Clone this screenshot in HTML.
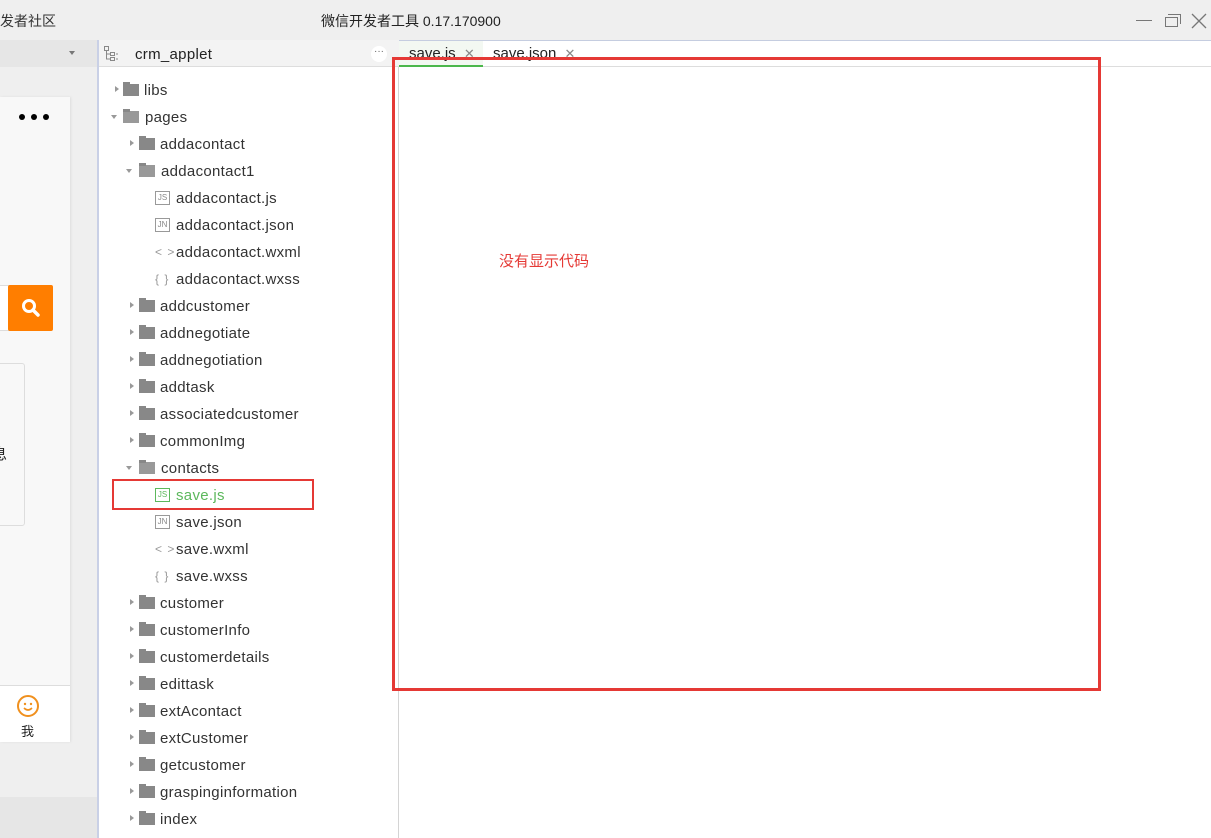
<!DOCTYPE html>
<html><head><meta charset="utf-8"><style>
*{margin:0;padding:0;box-sizing:border-box}
body{width:1211px;height:838px;overflow:hidden;background:#fff;font-family:"Liberation Sans","Noto Sans CJK SC",sans-serif;position:relative;color:#333}
.a{position:absolute}
.row{position:absolute;height:27px;line-height:29px;font-size:15px;letter-spacing:0.3px;color:#333;white-space:nowrap}
.arr{position:absolute;width:0;height:0}
.ar{border-left:4px solid #999;border-top:3px solid transparent;border-bottom:3px solid transparent}
.ad{border-top:4px solid #999;border-left:3px solid transparent;border-right:3px solid transparent}
.fold{position:absolute;width:16px;height:12px;background:#888;top:8px}
.fold:before{content:"";position:absolute;left:0;top:-2px;width:7px;height:3px;background:#888}
.fi{position:absolute;top:7px;width:15px;height:14px;border:1px solid #999;font-size:8px;line-height:12px;text-align:center;color:#888;letter-spacing:0}
.fs{position:absolute;top:0;font-size:12px;color:#999;letter-spacing:1px}
</style></head><body>
<div class="a" style="left:0;top:0;width:1211px;height:40px;background:#efefef"></div>
<div class="a" style="left:0;top:11px;font-size:14px;color:#333">发者社区</div>
<div class="a" style="left:321px;top:11px;font-size:14px;color:#222">微信开发者工具 0.17.170900</div>
<div class="a" style="left:1136px;top:20px;width:16px;height:1px;background:#777"></div>
<div class="a" style="left:1165px;top:17px;width:13px;height:10px;border:1px solid #777"></div>
<div class="a" style="left:1168px;top:14px;width:13px;height:10px;border-top:1px solid #777;border-right:1px solid #777"></div>
<svg class="a" style="left:1191px;top:13px" width="16" height="16"><path d="M1 1L15 15M15 1L1 15" stroke="#777" stroke-width="1.3"/></svg>
<div class="a" style="left:399px;top:40px;width:812px;height:1px;background:#c5cde0"></div>
<div class="a" style="left:0;top:40px;width:97px;height:798px;background:#efefef"></div>
<div class="a" style="left:0;top:40px;width:97px;height:27px;background:#e6e6e6"></div>
<div class="arr ad" style="left:69px;top:51px;border-top-color:#777"></div>
<div class="a" style="left:0;top:97px;width:70px;height:645px;background:#f8f8f8;box-shadow:1px 0 2px #ddd"></div>
<div class="a" style="left:19px;top:114px;width:6px;height:6px;border-radius:3px;background:#000"></div>
<div class="a" style="left:31px;top:114px;width:6px;height:6px;border-radius:3px;background:#000"></div>
<div class="a" style="left:43px;top:114px;width:6px;height:6px;border-radius:3px;background:#000"></div>
<div class="a" style="left:0;top:285px;width:10px;height:46px;background:#fff;border:1px solid #ddd;border-left:none"></div>
<div class="a" style="left:8px;top:285px;width:45px;height:46px;background:#ff7e00;border-radius:2px"></div>
<svg class="a" style="left:20px;top:297px" width="22" height="22"><circle cx="9" cy="9" r="5.5" fill="none" stroke="#fff" stroke-width="3"/><path d="M13 13 L18 18" stroke="#fff" stroke-width="3.5" stroke-linecap="round"/></svg>
<div class="a" style="left:-3px;top:363px;width:28px;height:163px;border:1px solid #ddd;border-radius:3px;background:#f8f8f8"></div>
<div class="a" style="left:-8px;top:443px;font-size:15px;color:#222">息</div>
<div class="a" style="left:0;top:685px;width:70px;height:57px;background:#fff;border-top:1px solid #ddd"></div>
<svg class="a" style="left:16px;top:694px" width="26" height="24"><circle cx="12" cy="12" r="10" fill="none" stroke="#f0901e" stroke-width="2"/><circle cx="9" cy="10" r="1.2" fill="#f0901e"/><circle cx="15" cy="10" r="1.2" fill="#f0901e"/><path d="M8 14 Q12 18 16 14" fill="none" stroke="#f0901e" stroke-width="1.6"/></svg>
<div class="a" style="left:21px;top:721px;font-size:13px;color:#222">我</div>
<div class="a" style="left:0;top:797px;width:97px;height:41px;background:#e6e6e6"></div>
<div class="a" style="left:97px;top:40px;width:2px;height:798px;background:#c9d0e6"></div>
<div class="a" style="left:99px;top:40px;width:300px;height:27px;background:#f3f3f3;border-bottom:1px solid #ddd"></div>
<svg class="a" style="left:103px;top:45px" width="18" height="18"><g fill="none" stroke="#888" stroke-width="1"><rect x="1.5" y="1.5" width="4" height="4"/><rect x="7.5" y="7.5" width="4" height="3"/><rect x="7.5" y="12.5" width="4" height="3"/><path d="M3.5 5.5V14H7.5M3.5 9H7.5M13 9h2M13 14h2"/></g></svg>
<div class="a" style="left:135px;top:46px;font-size:15px;letter-spacing:0.3px;color:#222">crm_applet</div>
<div class="a" style="left:371px;top:46px;width:16px;height:16px;border-radius:8px;background:#fff;font-size:10px;line-height:12px;text-align:center;color:#666">···</div>
<div class="a" style="left:398px;top:67px;width:1px;height:771px;background:#d4d4d4"></div>
<div class="a" style="left:399px;top:41px;width:84px;height:26px;background:#f3f8f2;border-bottom:2px solid #4cb84c"></div>
<div class="a" style="left:409px;top:45px;font-size:15px;color:#222">save.js <span style="color:#888;font-size:13px;margin-left:4px">✕</span></div>
<div class="a" style="left:493px;top:45px;font-size:15px;color:#222">save.json <span style="color:#888;font-size:13px;margin-left:4px">✕</span></div>
<div class="a" style="left:483px;top:66px;width:728px;height:1px;background:#ddd"></div>
<div class="row" style="left:115px;top:76px"><div class="arr ar" style="left:0;top:10px"></div><div class="fold" style="left:8px"></div><span style="position:absolute;left:29px">libs</span></div>
<div class="row" style="left:111px;top:103px"><div class="arr ad" style="left:0;top:12px"></div><div class="fold" style="left:12px;background:#999"></div><span style="position:absolute;left:34px">pages</span></div>
<div class="row" style="left:130px;top:130px"><div class="arr ar" style="left:0;top:10px"></div><div class="fold" style="left:9px"></div><span style="position:absolute;left:30px">addacontact</span></div>
<div class="row" style="left:126px;top:157px"><div class="arr ad" style="left:0;top:12px"></div><div class="fold" style="left:13px;background:#999"></div><span style="position:absolute;left:35px">addacontact1</span></div>
<div class="row" style="left:155px;top:184px"><div class="fi">JS</div><span style="position:absolute;left:21px">addacontact.js</span></div>
<div class="row" style="left:155px;top:211px"><div class="fi">JN</div><span style="position:absolute;left:21px">addacontact.json</span></div>
<div class="row" style="left:155px;top:238px"><span class="fs">&lt; &gt;</span><span style="position:absolute;left:21px">addacontact.wxml</span></div>
<div class="row" style="left:155px;top:265px"><span class="fs">{ }</span><span style="position:absolute;left:21px">addacontact.wxss</span></div>
<div class="row" style="left:130px;top:292px"><div class="arr ar" style="left:0;top:10px"></div><div class="fold" style="left:9px"></div><span style="position:absolute;left:30px">addcustomer</span></div>
<div class="row" style="left:130px;top:319px"><div class="arr ar" style="left:0;top:10px"></div><div class="fold" style="left:9px"></div><span style="position:absolute;left:30px">addnegotiate</span></div>
<div class="row" style="left:130px;top:346px"><div class="arr ar" style="left:0;top:10px"></div><div class="fold" style="left:9px"></div><span style="position:absolute;left:30px">addnegotiation</span></div>
<div class="row" style="left:130px;top:373px"><div class="arr ar" style="left:0;top:10px"></div><div class="fold" style="left:9px"></div><span style="position:absolute;left:30px">addtask</span></div>
<div class="row" style="left:130px;top:400px"><div class="arr ar" style="left:0;top:10px"></div><div class="fold" style="left:9px"></div><span style="position:absolute;left:30px">associatedcustomer</span></div>
<div class="row" style="left:130px;top:427px"><div class="arr ar" style="left:0;top:10px"></div><div class="fold" style="left:9px"></div><span style="position:absolute;left:30px">commonImg</span></div>
<div class="row" style="left:126px;top:454px"><div class="arr ad" style="left:0;top:12px"></div><div class="fold" style="left:13px;background:#999"></div><span style="position:absolute;left:35px">contacts</span></div>
<div class="row" style="left:155px;top:481px"><div class="fi" style="border-color:#5cb85c;color:#5cb85c">JS</div><span style="position:absolute;left:21px;color:#5cb85c">save.js</span></div>
<div class="row" style="left:155px;top:508px"><div class="fi">JN</div><span style="position:absolute;left:21px">save.json</span></div>
<div class="row" style="left:155px;top:535px"><span class="fs">&lt; &gt;</span><span style="position:absolute;left:21px">save.wxml</span></div>
<div class="row" style="left:155px;top:562px"><span class="fs">{ }</span><span style="position:absolute;left:21px">save.wxss</span></div>
<div class="row" style="left:130px;top:589px"><div class="arr ar" style="left:0;top:10px"></div><div class="fold" style="left:9px"></div><span style="position:absolute;left:30px">customer</span></div>
<div class="row" style="left:130px;top:616px"><div class="arr ar" style="left:0;top:10px"></div><div class="fold" style="left:9px"></div><span style="position:absolute;left:30px">customerInfo</span></div>
<div class="row" style="left:130px;top:643px"><div class="arr ar" style="left:0;top:10px"></div><div class="fold" style="left:9px"></div><span style="position:absolute;left:30px">customerdetails</span></div>
<div class="row" style="left:130px;top:670px"><div class="arr ar" style="left:0;top:10px"></div><div class="fold" style="left:9px"></div><span style="position:absolute;left:30px">edittask</span></div>
<div class="row" style="left:130px;top:697px"><div class="arr ar" style="left:0;top:10px"></div><div class="fold" style="left:9px"></div><span style="position:absolute;left:30px">extAcontact</span></div>
<div class="row" style="left:130px;top:724px"><div class="arr ar" style="left:0;top:10px"></div><div class="fold" style="left:9px"></div><span style="position:absolute;left:30px">extCustomer</span></div>
<div class="row" style="left:130px;top:751px"><div class="arr ar" style="left:0;top:10px"></div><div class="fold" style="left:9px"></div><span style="position:absolute;left:30px">getcustomer</span></div>
<div class="row" style="left:130px;top:778px"><div class="arr ar" style="left:0;top:10px"></div><div class="fold" style="left:9px"></div><span style="position:absolute;left:30px">graspinginformation</span></div>
<div class="row" style="left:130px;top:805px"><div class="arr ar" style="left:0;top:10px"></div><div class="fold" style="left:9px"></div><span style="position:absolute;left:30px">index</span></div>
<div class="a" style="left:112px;top:479px;width:202px;height:31px;border:2px solid #e53935"></div>
<div class="a" style="left:392px;top:57px;width:709px;height:634px;border:3px solid #e53935"></div>
<div class="a" style="left:499px;top:250px;font-size:15px;color:#e53935">没有显示代码</div>
</body></html>
